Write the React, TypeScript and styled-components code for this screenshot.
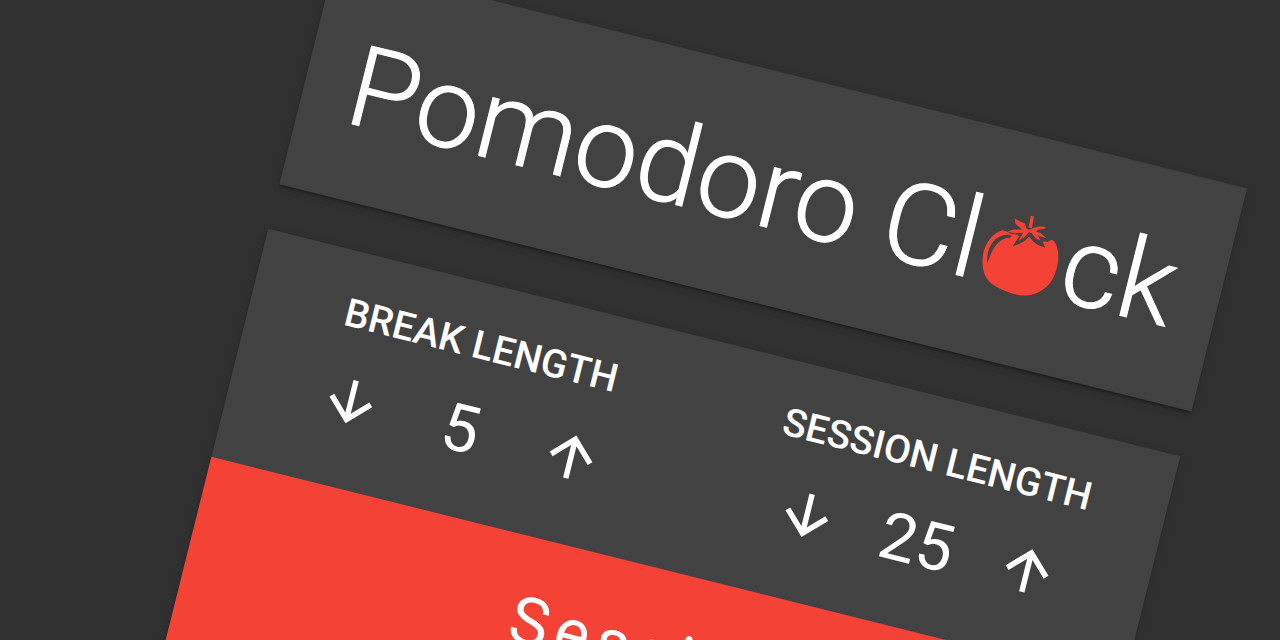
import React, { useState } from "react";
import styled, { createGlobalStyle } from "styled-components";

const GlobalStyle = createGlobalStyle`
  *, *::before, *::after { box-sizing: border-box; }
  body {
    margin: 0;
    background: #303030;
    color: #fff;
    font-family: Roboto, "Liberation Sans", sans-serif;
    overflow: hidden;
  }
`;

const Page = styled.main`
  height: 100vh;
  overflow: hidden;
`;

const Board = styled.div`
  display: flex;
  flex-direction: column;
  gap: 46px;
  width: 100%;
  max-width: 940px;
  margin: 0 auto;
  transform-origin: 0 0;
  transform: translate(165px, -39px) rotate(14deg);
`;

const Card = styled.section`
  background: #424242;
  box-shadow: 0 3px 3px -1px rgba(0, 0, 0, 0.35), 0 2px 8px rgba(0, 0, 0, 0.1);
`;

const TitleCard = styled(Card)`
  padding: 47px 40px 45px;
`;

const Title = styled.h1`
  display: flex;
  justify-content: center;
  align-items: center;
  margin: 0;
  font-size: 113px;
  line-height: 138px;
  font-weight: 300;
  -webkit-text-stroke: 1px #fff;
  white-space: pre;
`;

const TomatoIcon = styled.svg`
  width: 88px;
  height: 88px;
  margin: 10px 0 0 -2px;
`;

const Lengths = styled.div`
  display: grid;
  grid-template-columns: 1fr 1fr;
  padding: 40px 0 47px;
`;

const LengthGroup = styled.div`
  display: flex;
  flex-direction: column;
  align-items: center;
  gap: 23px;
`;

const LengthLabel = styled.h2`
  margin: 0;
  font-size: 39px;
  line-height: 44px;
  font-weight: 500;
  text-transform: uppercase;
  white-space: nowrap;
`;

const Stepper = styled.div`
  display: flex;
  justify-content: space-between;
  align-items: center;
  width: 293px;
  height: 81px;
`;

const StepButton = styled.button`
  display: flex;
  padding: 0;
  border: 0;
  background: none;
  color: inherit;
  cursor: pointer;
`;

const ArrowIcon = styled.svg`
  width: 66px;
  height: 66px;
  fill: currentColor;
`;

const Value = styled.output`
  font-size: 66px;
  line-height: 80px;
`;

const Timer = styled.div`
  min-height: 480px;
  padding-top: 44px;
  background: #f44336;
  text-align: center;
`;

const TimerLabel = styled.p`
  margin: 0;
  font-size: 66px;
  line-height: 80px;
  letter-spacing: 7px;
`;

const ARROW_DOWN = "M20 12l-1.41-1.41L13 16.17V4h-2v12.17l-5.58-5.59L4 12l8 8 8-8z";
const ARROW_UP = "M4 12l1.41 1.41L11 7.83V20h2V7.83l5.58 5.59L20 12l-8-8-8 8z";

function Tomato() {
  return (
    <TomatoIcon viewBox="48 36 264 264" role="img" aria-label="o">
      <g transform="rotate(-14 180 168)">
        <path
          fill="#f44336"
          d="M127 89C99 98 78 124 70 158C64 196 71 228 92 247C110 262 150 281 185 285C222 287 252 270 270 248C289 222 297 188 295 157C293 138 286 124 276 118L262 124L246 110L215 104L185 100L172 102L152 98L140 93Z"
        />
        <path
          fill="#424242"
          d="M146 98L172 102L178 107L158 138C178 129 192 126 203 113L208 108L219 122C230 132 242 137 256 141L248 123L266 124L244 100L208 84L180 90Z"
        />
        <path fill="#424242" d="M82 188C79 150 96 114 128 105C138 102 149 103 156 106L150 112C134 112 124 118 115 127C97 145 92 165 82 188Z" />
        <path fill="#f44336" d="M213 46L222 48L216 83L206 81Z" />
        <path
          fill="#f44336"
          d="M164 54L181 63L196 70L199 83L206 88L213 86L222 82L238 78L258 79L254 85L234 88L229 93L243 98L260 113L240 107L234 105L242 120L228 114L216 98L207 95L195 109L175 122L190 97L168 98L142 94L162 87L186 87L177 79L167 70Z"
        />
      </g>
    </TomatoIcon>
  );
}

interface LengthControlProps {
  label: string;
  initial: number;
}

function LengthControl({ label, initial }: LengthControlProps) {
  const [value, setValue] = useState(initial);
  return (
    <LengthGroup>
      <LengthLabel>{label}</LengthLabel>
      <Stepper>
        <StepButton aria-label={`Decrease ${label}`} onClick={() => setValue(Math.max(1, value - 1))}>
          <ArrowIcon viewBox="0 0 24 24" aria-hidden="true">
            <path d={ARROW_DOWN} />
          </ArrowIcon>
        </StepButton>
        <Value aria-label={label}>{value}</Value>
        <StepButton aria-label={`Increase ${label}`} onClick={() => setValue(value + 1)}>
          <ArrowIcon viewBox="0 0 24 24" aria-hidden="true">
            <path d={ARROW_UP} />
          </ArrowIcon>
        </StepButton>
      </Stepper>
    </LengthGroup>
  );
}

export default function App() {
  return (
    <Page>
      <GlobalStyle />
      <Board>
        <TitleCard>
          <Title>
            <span>Pomodoro Cl</span>
            <Tomato />
            <span>ck</span>
          </Title>
        </TitleCard>
        <Card>
          <Lengths>
            <LengthControl label="Break length" initial={5} />
            <LengthControl label="Session length" initial={25} />
          </Lengths>
          <Timer>
            <TimerLabel>Session</TimerLabel>
          </Timer>
        </Card>
      </Board>
    </Page>
  );
}
